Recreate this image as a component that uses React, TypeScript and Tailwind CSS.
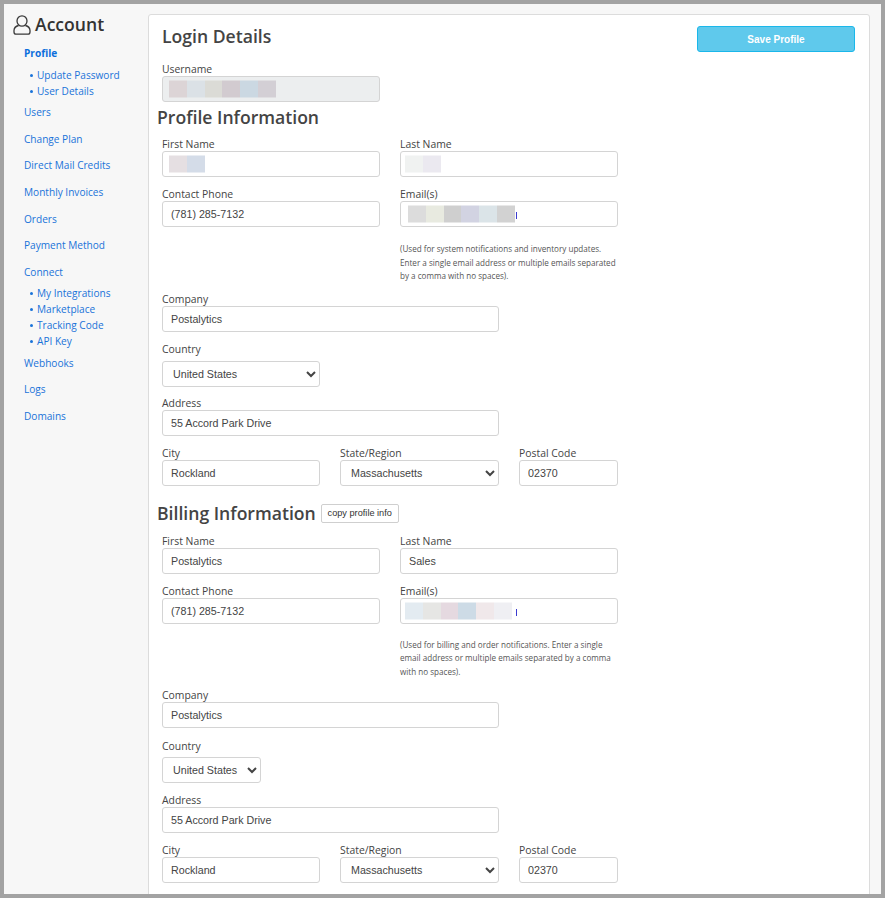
const labelFont = "font-['Open_Sans','Liberation_Sans',sans-serif]";
const valueFont = "font-['Liberation_Sans',Arial,sans-serif]";

function Redacted({ colors, left }: { colors: string[]; left: string }) {
  return (
    <div className={`absolute top-1/2 flex -translate-y-1/2 ${left}`}>
      {colors.map((c, i) => (
        <div key={i} className="h-[17px] w-[17.8px]" style={{ backgroundColor: c }} />
      ))}
    </div>
  );
}

function Label({ children }: { children: React.ReactNode }) {
  return <label className={`block h-[13px] text-[10.4px] leading-[13px] text-[#444] ${labelFont}`}>{children}</label>;
}

function TextField({
  label,
  value = "",
  width,
  className = "",
  disabled = false,
  children,
}: {
  label: string;
  value?: string;
  width: string;
  className?: string;
  disabled?: boolean;
  children?: React.ReactNode;
}) {
  return (
    <div className={`${width} ${className}`}>
      <Label>{label}</Label>
      <div className="relative">
        <input
          readOnly
          value={value}
          className={`block h-[26px] w-full rounded-[3px] border border-[#d4d4d4] pl-[8px] text-[10.7px] text-[#444] outline-none ${valueFont} ${disabled ? "bg-[#eceeef]" : "bg-white"}`}
        />
        {children}
      </div>
    </div>
  );
}

function SelectField({
  label,
  value,
  width,
  className = "",
  gap = "mb-0",
}: {
  label: string;
  value: string;
  width: string;
  className?: string;
  gap?: string;
}) {
  return (
    <div className={`${width} ${className}`}>
      <div className={gap}>
        <Label>{label}</Label>
      </div>
      <select
        defaultValue={value}
        className={`block h-[26px] w-full rounded-[3px] border border-[#d4d4d4] bg-white pl-[6px] pr-[2px] text-[10.7px] text-[#444] outline-none ${valueFont}`}
      >
        <option>{value}</option>
      </select>
    </div>
  );
}

function SectionTitle({ children }: { children: React.ReactNode }) {
  return <h2 className={`text-[17.6px] leading-[24px] font-semibold text-[#444] ${labelFont}`}>{children}</h2>;
}

function Note({ children }: { children: React.ReactNode }) {
  return <p className={`w-[218px] text-[8.1px] leading-[13.5px] text-[#555] ${labelFont}`}>{children}</p>;
}

function ContactBlock({
  first,
  last,
  email,
  emailLeft,
  note,
  countryWidth,
  firstRedacted,
  lastRedacted,
  gaps,
}: {
  first?: string;
  last?: string;
  email: string[];
  emailLeft: string;
  note: React.ReactNode;
  countryWidth: string;
  firstRedacted?: string[];
  lastRedacted?: string[];
  gaps: { note: string; company: string; country: string; countryLabel: string; address: string; city: string };
}) {
  return (
    <div>
      <div className="flex gap-[20px]">
        <TextField label="First Name" value={first} width="w-[218px]">
          {firstRedacted && <Redacted colors={firstRedacted} left="left-[7px]" />}
        </TextField>
        <TextField label="Last Name" value={last} width="w-[218px]">
          {lastRedacted && <Redacted colors={lastRedacted} left="left-[5px]" />}
        </TextField>
      </div>
      <div className="mt-[11px] flex gap-[20px]">
        <TextField label="Contact Phone" value="(781) 285-7132" width="w-[218px]" />
        <TextField label="Email(s)" width="w-[218px]">
          <Redacted colors={email} left={emailLeft} />
          <div className="absolute left-[116px] top-[11px] h-[7px] w-px bg-[#3b3bd0]" />
        </TextField>
      </div>
      <div className={`ml-[238px] ${gaps.note}`}>{note}</div>
      <TextField label="Company" value="Postalytics" width="w-[337px]" className={gaps.company} />
      <SelectField label="Country" value="United States" width={countryWidth} className={gaps.country} gap={gaps.countryLabel} />
      <TextField label="Address" value="55 Accord Park Drive" width="w-[337px]" className={gaps.address} />
      <div className={`flex ${gaps.city}`}>
        <TextField label="City" value="Rockland" width="w-[158px]" />
        <SelectField label="State/Region" value="Massachusetts" width="w-[159px]" className="ml-[20px]" />
        <TextField label="Postal Code" value="02370" width="w-[99px]" className="ml-[20px]" />
      </div>
    </div>
  );
}

const menu: { name: string; active?: boolean; sub?: string[] }[] = [
  { name: "Profile", active: true, sub: ["Update Password", "User Details"] },
  { name: "Users" },
  { name: "Change Plan" },
  { name: "Direct Mail Credits" },
  { name: "Monthly Invoices" },
  { name: "Orders" },
  { name: "Payment Method" },
  { name: "Connect", sub: ["My Integrations", "Marketplace", "Tracking Code", "API Key"] },
  { name: "Webhooks" },
  { name: "Logs" },
  { name: "Domains" },
];

function Sidebar() {
  return (
    <aside className={`w-[144px] shrink-0 ${labelFont}`}>
      <div className="ml-[9px] mt-[10px] flex h-[22px] items-center gap-[4px]">
        <svg viewBox="0 0 18 20" className="h-[20px] w-[18px]" fill="none" stroke="#3a3a3a" strokeWidth="1.3">
          <ellipse cx="9" cy="6" rx="5" ry="5.2" />
          <path d="M5.6 10.5 C2.6 11.3 1 13.2 1 15.6 V17 C1 18.4 2 19.2 3.2 19.2 H14.8 C16 19.2 17 18.4 17 17 V15.6 C17 13.2 15.4 11.3 12.4 10.5" />
        </svg>
        <span className="-translate-y-px text-[17.6px] font-semibold leading-[22px] text-[#333]">Account</span>
      </div>
      <nav className="ml-[20px] mt-[4.5px]">
        {menu.map((item) => (
          <div key={item.name}>
            <a className={`flex h-[26.67px] items-center text-[10.1px] ${item.active ? "font-bold text-[#0b6fdc]" : "text-[#1a73d9]"}`}>
              {item.name}
            </a>
            {item.sub && (
              <ul className="ml-[6px]">
                {item.sub.map((s) => (
                  <li key={s} className="flex h-[16px] items-center text-[10.1px] text-[#1a73d9]">
                    <span className="mr-[4px] inline-block h-[3px] w-[3px] rounded-full bg-[#1a73d9]" />
                    {s}
                  </li>
                ))}
              </ul>
            )}
          </div>
        ))}
      </nav>
    </aside>
  );
}

export default function App() {
  return (
    <div className="h-[898px] w-[885px] overflow-hidden border-4 border-[#a3a3a3] bg-[#f7f7f7]">
      <div className="flex h-full">
        <Sidebar />
        <main className="mr-[11px] mt-[10px] h-[900px] flex-1 rounded-[3px] border border-[#dcdcdc] bg-white pl-[13px] pr-[14px]">
          <div className="flex items-start justify-between pt-[11px]">
            <h1 className={`h-[21px] text-[17.6px] font-semibold leading-[21px] text-[#444] ${labelFont}`}>Login Details</h1>
            <button className={`h-[26px] w-[158px] rounded-[3px] border border-[#1ab7ea] bg-[#5fc9ec] text-[10px] font-bold text-white ${valueFont}`}>
              Save Profile
            </button>
          </div>
          <TextField label="Username" width="w-[218px]" className="mt-[11px]" disabled>
            <Redacted colors={["#dcd4d6", "#dbe1e6", "#dbdbd6", "#d2cbd0", "#cbd8e2", "#d3cfd5"]} left="left-[7px]" />
          </TextField>
          <div className="-ml-[5px] mt-[3px]">
            <SectionTitle>Profile Information</SectionTitle>
          </div>
          <div className="mt-[9px]">
            <ContactBlock
              email={["#dcdcdc", "#e8eae0", "#cfcfcf", "#d2d3e2", "#dbe4e8", "#d2d2d2"]}
              emailLeft="left-[8px]"
              firstRedacted={["#e5dfe2", "#d4dce8"]}
              lastRedacted={["#f0f2f1", "#ebe9f0"]}
              countryWidth="w-[158px]"
              gaps={{ note: "mt-[15px]", company: "mt-[10px]", country: "mt-[11px]", countryLabel: "mb-[5px]", address: "mt-[10px]", city: "mt-[11px]" }}
              note={
                <Note>
                  (Used for system notifications and inventory updates. Enter a single email address or multiple emails separated by a comma with no spaces).
                </Note>
              }
            />
          </div>
          <div className="-ml-[5px] mt-[15px] flex h-[24px] items-center gap-[5px]">
            <SectionTitle>Billing Information</SectionTitle>
            <button className={`mt-[2px] h-[19px] w-[78px] rounded-[2px] border border-[#cfcfcf] bg-white text-[9.2px] text-[#333] ${valueFont}`}>
              copy profile info
            </button>
          </div>
          <div className="mt-[10px]">
            <ContactBlock
              first="Postalytics"
              last="Sales"
              email={["#e3ebf1", "#e6e6e4", "#e5d9e0", "#cddbe6", "#f0e8ea", "#efeff3"]}
              emailLeft="left-[5px]"
              countryWidth="w-[99px]"
              gaps={{ note: "mt-[14px]", company: "mt-[11px]", country: "mt-[12px]", countryLabel: "mb-[4px]", address: "mt-[11px]", city: "mt-[11px]" }}
              note={
                <Note>
                  (Used for billing and order notifications. Enter a single email address or multiple emails separated by a comma with no spaces).
                </Note>
              }
            />
          </div>
        </main>
      </div>
    </div>
  );
}
